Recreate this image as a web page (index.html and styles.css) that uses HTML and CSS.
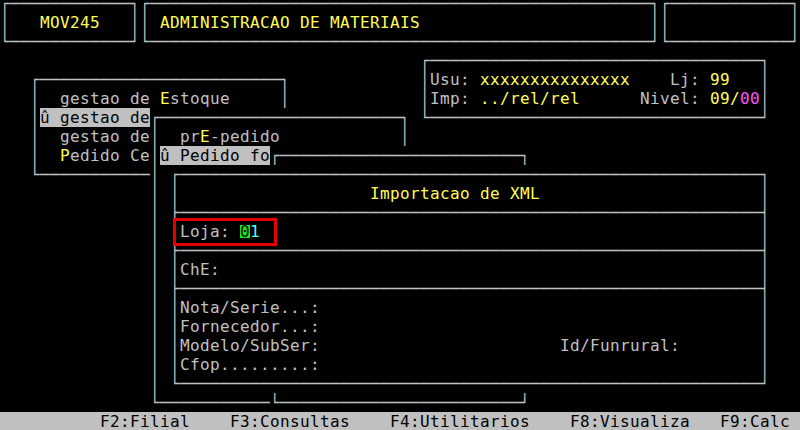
FILE: index.html
```html
<!DOCTYPE html>
<html lang="pt">
<head>
    <meta charset="UTF-8">
    <meta name="viewport" content="width=device-width, initial-scale=1.0">
    <title>MOV245 - Importacao de XML</title>
    <link rel="stylesheet" href="styles.css">
</head>
<body>
<pre class="screen">┌────────────┐┌──────────────────────────────────────────────────┐┌────────────┐
│   <span class="y">MOV245</span>   ││ <span class="y">ADMINISTRACAO DE MATERIAIS</span>                       ││            │
└────────────┘└──────────────────────────────────────────────────┘└────────────┘
                                          ┌─────────────────────────────────┐
   ┌────────────────────────┐             │Usu: <span class="y">xxxxxxxxxxxxxxx</span>    Lj: <span class="y">99</span>   │
   │  gestao de <span class="y">E</span>stoque     │             │Imp: <span class="y">../rel/rel</span>      Nivel: <span class="y">09/</span><span class="m">00</span>│
   │<span class="hl">û gestao de</span>┌────────────────────────┐ └─────────────────────────────────┘
   │  gestao de│  pr<span class="y">E</span>-pedido            │
   │  <span class="y">P</span>edido Ce│<span class="hl">û Pedido fo</span>┌────────────────────────┐
   └───────────│ ┌──────────────────────────────────────────────────────────┐
               │ │                   <span class="y">Importacao de XML</span>                      │
               │ ├──────────────────────────────────────────────────────────┤
               │ │Loja: <span class="cur">0</span><span class="c">1</span>                                                  │
               │ ├──────────────────────────────────────────────────────────┤
               │ │ChE:                                                      │
               │ ├──────────────────────────────────────────────────────────┤
               │ │Nota/Serie...:                                            │
               │ │Fornecedor...:                                            │
               │ │Modelo/SubSer:                        Id/Funrural:        │
               │ │Cfop.........:                                            │
               │ └──────────────────────────────────────────────────────────┘
               └───────────└────────────────────────┘</pre>
<div class="fkeys">          F2:Filial    F3:Consultas    F4:Utilitarios    F8:Visualiza   F9:Calc</div>
<div class="focus-box"></div>
</body>
</html>
```

FILE: styles.css
```css
html, body {
    margin: 0;
    background-color: #000000;
}
body {
    width: 800px;
    height: 430px;
    overflow: hidden;
    position: relative;
}
.screen,
.fkeys {
    font-family: 'DejaVu Sans Mono', 'Liberation Mono', monospace;
    font-size: 16px;
    line-height: 19px;
    letter-spacing: 0.367px;
    white-space: pre;
}
.screen {
    margin: -6px 0 0 0;
    color: #c0c0c0;
}
.fkeys {
    height: 19px;
    background-color: #c0c0c0;
    color: #000000;
}
.y {
    color: #ffff55;
}
.m {
    color: #ff55ff;
}
.c {
    color: #55ffff;
}
.hl {
    background-color: #c0c0c0;
    color: #000000;
}
.cur {
    color: #000000;
    background: linear-gradient(transparent 2.5px, #11ee11 2.5px, #11ee11 15.5px, transparent 15.5px);
}
/* marca vermelha em volta do campo Loja */
.focus-box {
    position: absolute;
    left: 173px;
    top: 218px;
    width: 104px;
    height: 28px;
    border: 3px solid #e40000;
    box-sizing: border-box;
}
```
